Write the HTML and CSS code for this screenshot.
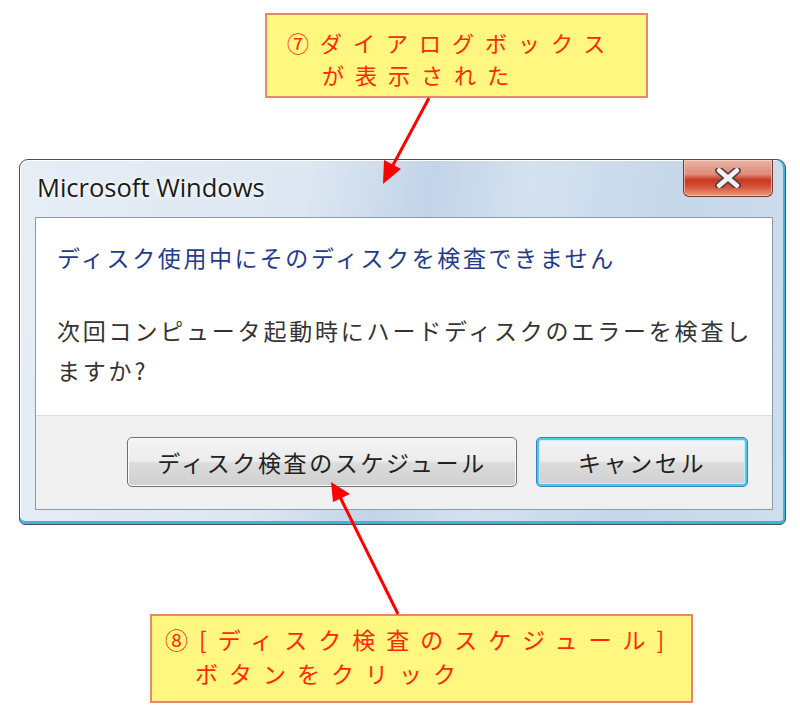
FILE: index.html
```html
<!DOCTYPE html>
<html lang="ja">
<head>
    <meta charset="UTF-8">
    <meta name="viewport" content="width=device-width, initial-scale=1.0">
    <title>ディスク検査のスケジュール</title>
    <link rel="stylesheet" href="styles.css">
</head>
<body>
    <div class="page">
        <div class="note note-top">
            <div>⑦ダイアログボックス</div>
            <div class="indent">が表示された</div>
        </div>

        <div class="window">
            <div class="titlebar">
                <span class="title">Microsoft Windows</span>
                <button class="close" aria-label="閉じる">
                    <svg viewBox="0 0 24 16" width="30" height="20">
                        <path d="M5 2 L19 14 M19 2 L5 14" stroke="#4e4240" stroke-width="6.4" stroke-linecap="round"/>
                        <path d="M5 2 L19 14 M19 2 L5 14" stroke="#f4f1f0" stroke-width="3.8" stroke-linecap="round"/>
                    </svg>
                </button>
            </div>
            <div class="panel">
                <div class="content">
                    <p class="main">ディスク使用中にそのディスクを検査できません</p>
                    <p class="sub">次回コンピュータ起動時にハードディスクのエラーを検査し<br>ますか?</p>
                </div>
                <div class="actions">
                    <button class="btn wide">ディスク検査のスケジュール</button>
                    <button class="btn default">キャンセル</button>
                </div>
            </div>
        </div>

        <div class="note note-bottom">
            <div>⑧[ディスク検査のスケジュール]</div>
            <div class="indent">ボタンをクリック</div>
        </div>

        <svg class="arrows" viewBox="0 0 800 716" width="800" height="716">
            <line x1="429" y1="98" x2="392" y2="167" stroke="#ff0000" stroke-width="3"/>
            <polygon points="383,184 384,160 401,169" fill="#ff0000"/>
            <line x1="398" y1="614" x2="340" y2="497" stroke="#ff0000" stroke-width="3"/>
            <polygon points="331,482 350,494 333,502" fill="#ff0000"/>
        </svg>
    </div>
</body>
</html>
```

FILE: styles.css
```css
body {
    margin: 0;
    background: #ffffff;
    font-family: "Noto Sans CJK JP", sans-serif;
}
.page {
    position: relative;
    width: 800px;
    height: 716px;
    overflow: hidden;
    padding-top: 13px;
    box-sizing: border-box;
}
.note {
    box-sizing: border-box;
    background: #fff780;
    border: 2px solid #e8886a;
    color: #ff2a00;
    font-family: "Noto Sans CJK JP", sans-serif;
    font-size: 22px;
}
.note-top {
    margin-left: 265px;
    width: 383px;
    height: 85px;
    padding: 11px 0 0 20px;
    letter-spacing: 11px;
    line-height: 32px;
}
.note-top .indent {
    padding-left: 35px;
}
.note-bottom {
    margin-left: 150px;
    margin-top: 89px;
    width: 543px;
    height: 89px;
    padding: 6px 0 0 13px;
    font-size: 23px;
    letter-spacing: 11px;
    line-height: 34px;
}
.note-bottom .indent {
    padding-left: 30px;
}
.window {
    box-sizing: border-box;
    margin-top: 61px;
    margin-left: 19px;
    width: 767px;
    height: 366px;
    border: 1px solid #4a5058;
    border-radius: 9px 9px 6px 6px;
    background: linear-gradient(100deg, #e6edf5 0%, #dde7f2 35%, #c3d4e8 50%, #d4e1ef 62%, #c6d7ea 80%, #cfdeee 100%);
    box-shadow: inset 0 -3px 0 #3cb4de, inset -2px 0 0 #3cb4de, inset 1px 1px 0 #ffffff;
    padding: 0 12px 14px 15px;
    display: flex;
    flex-direction: column;
}
.titlebar {
    height: 57px;
    display: flex;
    align-items: flex-start;
    justify-content: space-between;
}
.title {
    margin-top: 10px;
    padding-left: 2px;
    font-family: "Open Sans", "Noto Sans", sans-serif;
    font-size: 25.5px;
    color: #1b1b1b;
    text-shadow: 0 0 6px #ffffff, 0 0 3px #ffffff;
}
.close {
    width: 90px;
    height: 37px;
    border: 1px solid #6e3a32;
    border-top: none;
    border-radius: 0 0 6px 6px;
    background: linear-gradient(180deg, #eab3a6 0%, #dd8a78 40%, #c7381f 55%, #d6553a 75%, #e99a82 100%);
    box-shadow: inset 0 0 0 1px rgba(255, 220, 210, 0.6);
    display: flex;
    align-items: center;
    justify-content: center;
    padding: 0;
}
.panel {
    flex: 1;
    border: 1px solid #8d9aab;
    display: flex;
    flex-direction: column;
    background: #f0f0f0;
}
.content {
    height: 198px;
    background: #ffffff;
    border-bottom: 1px solid #dfdfdf;
    padding: 0 0 0 21px;
    box-sizing: border-box;
}
.main {
    margin: 23px 0 0;
    font-size: 23px;
    letter-spacing: 2.6px;
    color: #1f3b8f;
    line-height: 32px;
}
.sub {
    margin: 37px 0 0;
    font-size: 23px;
    letter-spacing: 2.8px;
    color: #333333;
    line-height: 40px;
}
.actions {
    display: flex;
    justify-content: flex-end;
    gap: 19px;
    padding: 21px 24px 0 0;
}
.btn {
    height: 50px;
    border: 1px solid #707070;
    border-radius: 5px;
    background: linear-gradient(180deg, #f4f4f4 0%, #ececec 48%, #dcdcdc 52%, #cfcfcf 100%);
    box-shadow: inset 0 0 0 1px #fbfbfb;
    font-family: "Noto Sans CJK JP", sans-serif;
    font-size: 23px;
    letter-spacing: 2.6px;
    color: #222222;
    padding: 0;
}
.btn.wide {
    width: 390px;
}
.btn.default {
    width: 212px;
    border-color: #3c7fb1;
    box-shadow: inset 0 0 0 2px #4cc8ef, inset 0 0 0 3px #c9eefb;
}
.arrows {
    position: absolute;
    left: 0;
    top: 0;
    pointer-events: none;
}
```
